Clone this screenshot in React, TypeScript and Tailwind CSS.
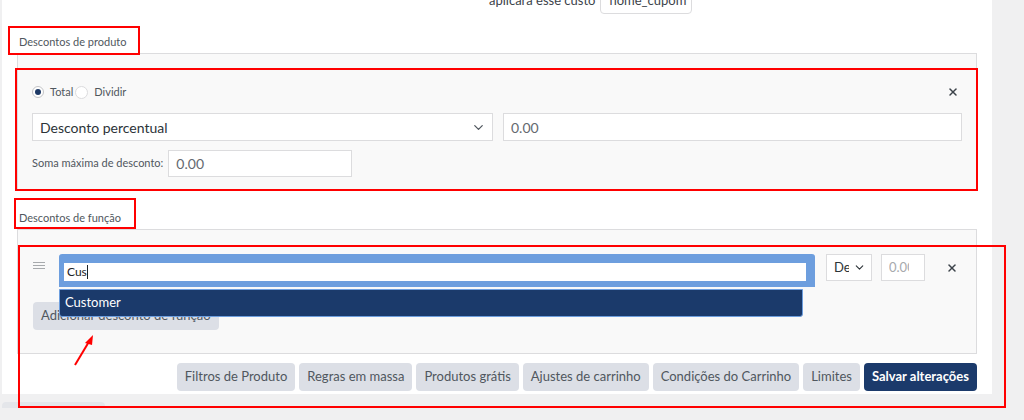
import { ChevronDown, X } from "lucide-react";

const font = { fontFamily: 'Lato, "Noto Sans", Arial, sans-serif' };

const buttons = [
  "Filtros de Produto",
  "Regras em massa",
  "Produtos grátis",
  "Ajustes de carrinho",
  "Condições do Carrinho",
  "Limites",
];

function RedBox({ className }: { className: string }) {
  return <div className={`pointer-events-none absolute border-2 border-[#ff0000] ${className}`} />;
}

export default function App() {
  return (
    <div className="relative h-[420px] w-[1024px] overflow-hidden bg-[#f0f0f1] text-[#50575e]" style={font}>
      <div className="ml-[2px] h-[406px] w-[990px] bg-white">
        {/* top cut-off row */}
        <div className="-mt-[12px] flex h-[26px] items-center pl-[487px] text-[13px]">
          <span className="text-[#3c434a]">aplicará esse custo</span>
          <div className="ml-[5px] flex h-[26px] w-[92px] items-center rounded-sm border border-[#dcdcde] px-[8px] text-[#3c434a]">
            nome_cupom
          </div>
        </div>

        {/* product discounts */}
        <div className="ml-[15px] mt-[20px] w-[960px]">
          <div className="pb-[3px] pl-[2px] text-[11px] leading-[16px]">Descontos de produto</div>
          <div className="border border-[#dcdcde] bg-[#f9f9f9] px-[14px] pb-[13px] pt-[30px]">
            <div className="flex items-center justify-between">
              <div className="flex items-center text-[11px] leading-[16px]">
                <span className="flex h-[12px] w-[12px] items-center justify-center rounded-full border border-[#c3c4c7] bg-white">
                  <span className="h-[6px] w-[6px] rounded-full bg-[#1d3966]" />
                </span>
                <span className="ml-[6px]">Total</span>
                <span className="ml-[2px] h-[13px] w-[13px] rounded-full border border-[#dcdcde] bg-white" />
                <span className="ml-[6px]">Dividir</span>
              </div>
              <X size={12} strokeWidth={3} className="mr-[3px] text-[#3c434a]" />
            </div>
            <div className="mt-[13px] flex gap-[10px]">
              <div className="flex h-[28px] w-[462px] items-center justify-between border border-[#dcdcde] bg-white pl-[7px] pr-[6px] text-[14px] text-[#2c3338]">
                <span>Desconto percentual</span>
                <ChevronDown size={15} strokeWidth={2} className="text-[#50575e]" />
              </div>
              <div className="flex h-[28px] w-[460px] items-center border border-[#dcdcde] bg-white px-[7px] text-[14px] text-[#646970]">
                0.00
              </div>
            </div>
            <div className="mt-[9px] flex items-center">
              <span className="text-[11px]">Soma máxima de desconto:</span>
              <div className="ml-[5px] flex h-[27px] w-[184px] items-center border border-[#dcdcde] bg-white px-[7px] text-[14px] text-[#646970]">
                0.00
              </div>
            </div>
          </div>
        </div>

        {/* role discounts */}
        <div className="ml-[15px] mt-[19px] w-[960px]">
          <div className="pb-[3px] pl-[2px] text-[11px] leading-[16px]">Descontos de função</div>
          <div className="h-[125px] border border-[#dcdcde] bg-[#f9f9f9] pl-[15px] pr-[14px] pt-[24px]">
            <div className="relative flex items-start">
              <div className="mt-[8px] flex w-[12px] flex-col gap-[2px]">
                <span className="h-[1px] bg-[#a7aaad]" />
                <span className="h-[1px] bg-[#a7aaad]" />
                <span className="h-[1px] bg-[#a7aaad]" />
              </div>
              <div className="ml-[14px] h-[33px] w-[756px] rounded-t-[3px] bg-[#6d9ede] pl-[5px] pr-[9px] pt-[9px]">
                <div className="flex h-[18px] items-center bg-white px-[3px] text-[12px] text-[#1d2327]">
                  Cus<span className="h-[14px] w-[1px] bg-[#1d2327]" />
                </div>
              </div>
              <div className="ml-[11px] flex h-[27px] w-[46px] items-center justify-between border border-[#dcdcde] bg-white pl-[7px] pr-[5px] text-[13px] text-[#2c3338]">
                <span className="w-[15px] overflow-hidden">De</span>
                <ChevronDown size={13} strokeWidth={2} />
              </div>
              <div className="ml-[9px] flex h-[27px] w-[44px] items-center border border-[#dcdcde] bg-white px-[7px] text-[13px] text-[#a7aaad]">
                <span className="w-[20px] overflow-hidden">0.00</span>
              </div>
              <X size={12} strokeWidth={3} className="ml-[21px] mt-[8px] text-[#3c434a]" />
              {/* autocomplete results */}
              <div className="absolute left-[26px] top-[35px] z-10 flex h-[28px] w-[744px] items-center rounded-b-[3px] border border-[#6d9ede] bg-[#1b3a6b] pl-[5px] text-[13px] text-white">
                Customer
              </div>
            </div>
            <div className="mt-[15px] flex h-[28px] w-fit items-center whitespace-nowrap rounded-sm bg-[#dcdfe6] px-[8px] text-[13px] text-[#50575e]">
              Adicionar desconto de função
            </div>
          </div>
          <div className="mt-[9px] flex justify-end gap-[4px]">
            {buttons.map((b) => (
              <div key={b} className="flex h-[28px] items-center whitespace-nowrap rounded-sm bg-[#dcdfe6] px-[8px] text-[13px] text-[#50575e]">
                {b}
              </div>
            ))}
            <div className="flex h-[28px] items-center whitespace-nowrap rounded-sm bg-[#1b3a6b] px-[8px] text-[13px] font-bold text-white">
              Salvar alterações
            </div>
          </div>
        </div>
      </div>
      <div className="ml-[2px] mt-[8px] h-[6px] w-[103px] rounded-t-sm bg-[#e4e6ea]" />

      {/* annotation overlays */}
      <RedBox className="left-[8px] top-[26px] h-[29px] w-[132px]" />
      <RedBox className="left-[15px] top-[68px] h-[123px] w-[963px]" />
      <RedBox className="left-[14px] top-[198px] h-[31px] w-[122px]" />
      <RedBox className="left-[18px] top-[245px] h-[163px] w-[988px]" />
      <svg className="pointer-events-none absolute left-[70px] top-[330px]" width="30" height="40" viewBox="0 0 30 40">
        <line x1="5" y1="35" x2="20" y2="10" stroke="#ff0000" strokeWidth="2" />
        <polygon points="23,5 15,13 22,15" fill="#ff0000" />
      </svg>
    </div>
  );
}
